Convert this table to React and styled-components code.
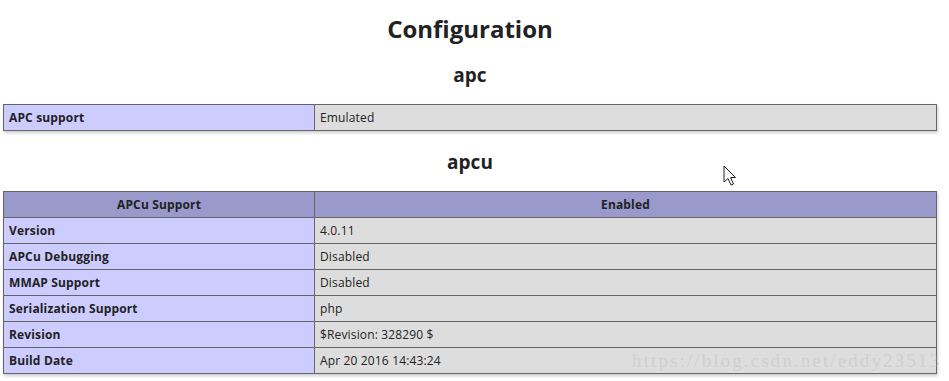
import React from "react";
import styled, { createGlobalStyle } from "styled-components";

const GlobalStyle = createGlobalStyle`
  body {
    margin: 0;
    background: #fff;
    color: #222;
    font-family: "Open Sans", "DejaVu Sans", sans-serif;
  }
`;

const apcRows = [["APC support", "Emulated"]];

const apcuRows = [
  ["Version", "4.0.11"],
  ["APCu Debugging", "Disabled"],
  ["MMAP Support", "Disabled"],
  ["Serialization Support", "php"],
  ["Revision", "$Revision: 328290 $"],
  ["Build Date", "Apr 20 2016 14:43:24"],
];

const App = () => {
  return (
    <Page>
      <GlobalStyle />
      <Title>Configuration</Title>
      <Section>apc</Section>
      <Table>
        <tbody>
          {apcRows.map(([k, v]) => (
            <tr key={k}>
              <Cell kind="e" first>{k}</Cell>
              <Cell kind="v">{v}</Cell>
            </tr>
          ))}
        </tbody>
      </Table>
      <Section>apcu</Section>
      <Table>
        <thead>
          <tr>
            <Cell as="th" kind="h" first>APCu Support</Cell>
            <Cell as="th" kind="h">Enabled</Cell>
          </tr>
        </thead>
        <tbody>
          {apcuRows.map(([k, v]) => (
            <tr key={k}>
              <Cell kind="e" first>{k}</Cell>
              <Cell kind="v">{v}</Cell>
            </tr>
          ))}
        </tbody>
      </Table>
      <Watermark>https://blog.csdn.net/eddy23513</Watermark>
      <Cursor width="14" height="22" viewBox="0 0 14 22">
        <path
          d="M1 1 L1 17 L5 13.5 L8 20 L10.5 19 L7.6 12.5 L12.5 12.5 Z"
          fill="#fff"
          stroke="#222"
          strokeWidth="1"
          strokeLinejoin="round"
        />
      </Cursor>
    </Page>
  );
};

export default App;

const Page = styled.div`
  position: relative;
  width: 934px;
  margin-left: 3px;
  padding-top: 13px;
  padding-bottom: 8px;
`;

const Title = styled.h1`
  margin: 0 0 17px;
  text-align: center;
  font-size: 24px;
  line-height: 32px;
  font-weight: bold;
`;

const Section = styled.h2`
  margin: 0 0 16px;
  text-align: center;
  font-size: 19px;
  line-height: 26px;
  font-weight: bold;

  table + & {
    margin-top: 18px;
  }
`;

const Table = styled.table`
  width: 934px;
  border-collapse: collapse;
  box-shadow: 1px 2px 3px #ccc;
`;

const colors = { e: "#ccf", h: "#99c", v: "#ddd" };

const Cell = styled.td`
  border: 1px solid #666;
  font-size: 12px;
  letter-spacing: 0.15px;
  line-height: 17px;
  padding: 4px 5px;
  height: 17px;
  vertical-align: middle;
  background-color: ${(p) => colors[p.kind]};
  font-weight: ${(p) => (p.kind === "v" ? "normal" : "bold")};
  text-align: ${(p) => (p.kind === "h" ? "center" : "left")};
  width: ${(p) => (p.first ? "300px" : "auto")};
  color: #222;
`;

const Watermark = styled.div`
  position: absolute;
  right: -4px;
  bottom: 10px;
  font-family: "Liberation Serif", serif;
  font-size: 19px;
  letter-spacing: 2.1px;
  line-height: 22px;
  color: rgba(175, 175, 175, 0.3);
  pointer-events: none;
  white-space: nowrap;
`;

const Cursor = styled.svg`
  position: absolute;
  left: 720px;
  top: 165px;
`;
